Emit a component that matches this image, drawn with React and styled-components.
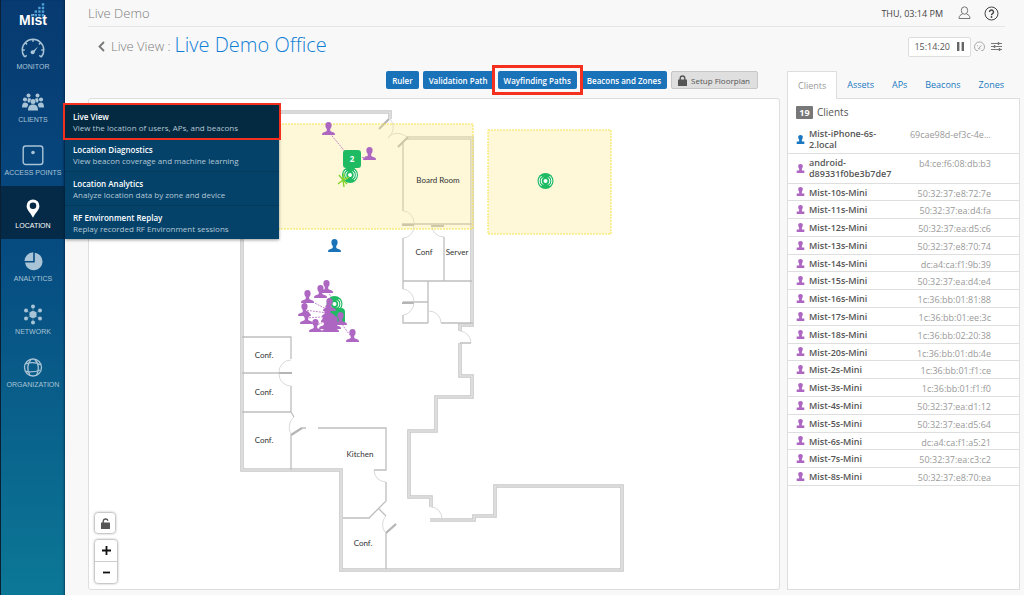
import React from "react";
import styled, { createGlobalStyle, css } from "styled-components";

const sans = '"Open Sans", "Noto Sans", sans-serif';

const Global = createGlobalStyle`
  * { box-sizing: border-box; }
  body { margin: 0; background: #f8f8f8; font-family: ${sans}; font-size: 9px; color: #555; }
  button { font-family: inherit; margin: 0; }
`;

const Page = styled.div`
  display: grid;
  grid-template-columns: 65px minmax(0, 1fr);
  min-height: 100vh;
`;

/* ---------- sidebar ---------- */

const Sidebar = styled.aside`
  border-left: 1px solid #0b2133;
  background: linear-gradient(#073a70, #064a80 40%, #095f8a 68%, #0c7897);
  box-shadow: inset -2px 0 2px -1px rgba(0, 20, 50, 0.5);
`;

const Logo = styled.a`
  display: block;
  position: relative;
  height: 27px;
  padding-top: 11px;
  color: #fff;
  font: bold 14px/18px "Liberation Sans", sans-serif;
  text-align: center;
  text-decoration: none;
`;

const LogoDots = styled.svg`
  position: absolute;
  top: 3px;
  left: 29px;
`;

const NavList = styled.ul`
  margin: 0;
  padding: 0;
  list-style: none;
`;

const NavItem = styled.li`
  position: relative;
  height: 53px;
  ${(p) => p.$active && css`background: #042a47;`}
`;

const NavLink = styled.a`
  display: flex;
  flex-direction: column;
  align-items: center;
  gap: 2px;
  padding-top: 11px;
  color: ${(p) => (p.$active ? "#fff" : "#a9c4d6")};
  font: 7px/10px "Liberation Sans", sans-serif;
  text-decoration: none;
  white-space: nowrap;
  svg { display: block; }
`;

const Flyout = styled.ul`
  position: absolute;
  left: 100%;
  bottom: 0;
  z-index: 5;
  width: 214px;
  margin: 0;
  padding: 0;
  list-style: none;
  background: #04426a;
  box-shadow: 0 1px 3px rgba(0, 0, 0, 0.4);
`;

const FlyoutItem = styled.li`
  border-bottom: ${(p) => (p.$line ? "1px solid #033a5c" : "0")};
  ${(p) => p.$current && css`
    position: relative;
    background: #042a41;
    box-shadow: 0 0 0 2px #f5301f;
  `}
`;

const FlyoutLink = styled.a`
  display: block;
  padding: 6px 8px 5px;
  color: #b4c8d5;
  font-size: 8px;
  line-height: 11px;
  text-decoration: none;
  strong { display: block; color: #fff; font-weight: 600; }
`;

/* ---------- main ---------- */

const Main = styled.main`
  display: flex;
  flex-direction: column;
  min-width: 0;
  padding: 0 4px 5px 23px;
`;

const TopBar = styled.header`
  display: flex;
  align-items: center;
  height: 27px;
  margin-right: 15px;
  border-bottom: 1px solid #e6e6e6;
  color: #7c7c7c;
  font-size: 13px;
  font-weight: 300;
`;

const Org = styled.span`
  flex: 1;
`;

const DateText = styled.time`
  margin-right: 14px;
  color: #444;
  font-size: 9px;
  font-weight: 400;
`;

const IconButton = styled.button`
  display: block;
  padding: 0;
  border: 0;
  background: none;
  color: ${(p) => p.$color || "#777"};
  svg { display: block; }
`;

const TopIcons = styled.div`
  display: flex;
  align-items: center;
  gap: 12px;
  margin-right: 6px;
`;

const TitleRow = styled.div`
  display: flex;
  align-items: center;
  height: 39px;
  padding: 0 18px 0 9px;
`;

const Title = styled.h1`
  display: flex;
  align-items: baseline;
  flex: 1;
  gap: 4px;
  margin: 0;
  padding-bottom: 2px;
  color: #0f7fd6;
  font-size: 20px;
  font-weight: 300;
  line-height: 28px;
`;

const Crumb = styled.a`
  display: flex;
  align-items: center;
  gap: 5px;
  color: #7c7c7c;
  font-size: 13px;
  font-weight: 300;
  text-decoration: none;
`;

const Clock = styled.div`
  display: flex;
  align-items: center;
  gap: 7px;
  height: 20px;
  margin-right: 3px;
  padding: 0 6px 0 5px;
  border: 1px solid #ddd;
  border-radius: 2px;
  background: #fff;
  color: #555;
  font-size: 9px;
`;

const ViewIcons = styled.div`
  display: flex;
  align-items: center;
  gap: 6px;
`;

const Columns = styled.div`
  display: grid;
  grid-template-columns: minmax(0, 1fr) 233px;
  gap: 7px;
  flex: 1;
`;

const MapColumn = styled.section`
  display: flex;
  flex-direction: column;
`;

const Toolbar = styled.div`
  display: flex;
  align-items: center;
  justify-content: flex-end;
  gap: 4px;
  height: 32px;
  padding: 0 22px 4px 0;
`;

const ToolButton = styled.button`
  height: 18px;
  padding: 0 6px;
  border: 0;
  border-radius: 2px;
  background: #1a72b9;
  color: #fff;
  font-size: 8px;
  font-weight: 600;
  white-space: nowrap;
  ${(p) => p.$marked && css`
    position: relative;
    z-index: 1;
    box-shadow: 0 0 0 3px #f8f8f8;
    &::after {
      content: "";
      position: absolute;
      inset: -6px;
      border: 3px solid #f5301f;
    }
  `}
`;

const SetupButton = styled(ToolButton)`
  display: flex;
  align-items: center;
  gap: 4px;
  padding: 0 7px 0 6px;
  border: 1px solid #c6c6c6;
  background: #dfdfdf;
  color: #555;
  font-weight: 400;
`;

const MapFrame = styled.div`
  position: relative;
  flex: 1;
  border: 1px solid #dedede;
  border-radius: 3px;
  background: #fff;
`;

const Plan = styled.svg`
  display: block;
  width: 100%;
`;

const MapControls = styled.div`
  position: absolute;
  left: 6px;
  bottom: 6px;
  display: flex;
  flex-direction: column;
  align-items: flex-start;
  gap: 7px;
`;

const ControlBox = styled.div`
  width: ${(p) => p.$width};
  border-radius: 3px;
  background: #fff;
  box-shadow: 0 0 3px rgba(0, 0, 0, 0.6);
`;

const ControlButton = styled.button`
  display: flex;
  align-items: center;
  justify-content: center;
  width: 100%;
  height: ${(p) => p.$height};
  padding: 0;
  border: 0;
  background: none;
  color: #111;
  & + & { border-top: 1px solid #ccc; }
`;

/* ---------- side panel ---------- */

const SideColumn = styled.aside`
  display: flex;
  flex-direction: column;
  padding-top: 5px;
`;

const Tabs = styled.div`
  display: flex;
  justify-content: space-between;
  padding-right: 8px;
`;

const Tab = styled.button`
  height: 27px;
  padding: 0 8px;
  border: 0;
  background: none;
  color: #1a78c2;
  font-size: 9px;
  ${(p) => p.$active && css`
    position: relative;
    height: 28px;
    margin-bottom: -1px;
    padding: 0 10px;
    border: 1px solid #dedede;
    border-bottom: 0;
    background: #fff;
    color: #999;
  `}
`;

const Panel = styled.div`
  flex: 1;
  border: 1px solid #dedede;
  background: #fff;
`;

const PanelTitle = styled.h2`
  display: flex;
  align-items: center;
  gap: 4px;
  height: 26px;
  margin: 0;
  padding-left: 8px;
  color: #555;
  font-size: 10px;
  font-weight: 400;
`;

const Count = styled.span`
  width: 17px;
  border-radius: 1px;
  background: #777;
  color: #fff;
  font-size: 9px;
  font-weight: 700;
  line-height: 13px;
  text-align: center;
`;

const ClientTable = styled.table`
  width: 100%;
  height: 361px;
  border-collapse: collapse;
  table-layout: fixed;
  font-size: 9px;
  line-height: 11px;
`;

const IconCell = styled.td`
  width: 21px;
  padding: 0 0 0 8px;
  border-bottom: 1px solid #dedede;
  svg { display: block; }
`;

const NameCell = styled.th`
  width: 86px;
  padding: 3px 0 2px;
  border-bottom: 1px solid #dedede;
  color: #555;
  font-weight: 600;
  text-align: left;
  vertical-align: top;
`;

const MacCell = styled.td`
  padding: 4px 28px 1px 0;
  border-bottom: 1px solid #dedede;
  color: #999;
  text-align: right;
  vertical-align: top;
  white-space: nowrap;
`;

/* ---------- icons ---------- */

const personPath =
  "M6.5 0C8.7 0 9.7 1.3 9.6 3.4C9.5 5.2 8.9 6.1 8.2 6.9L8.3 8.9C8.8 9.8 11.8 10 12.6 11.1L13 13H0L.4 11.1C1.2 10 4.2 9.8 4.7 8.9L4.8 6.9C4.1 6.1 3.5 5.2 3.4 3.4C3.3 1.3 4.3 0 6.5 0Z";

const Person = ({ color }) => (
  <svg width="9" height="9" viewBox="0 0 13 13" fill={color}>
    <path d="M6.500 0C9 0 10 1.300 9.800 3.400C9.700 5 9 6 8.500 6.900V9.500H12V13H1V9.500H4.500V6.900C4 6 3.300 5 3.200 3.400C3 1.300 4 0 6.500 0Z" />
  </svg>
);

const Lock = ({ open }) => (
  <svg width="9" height="11" viewBox="0 0 9 11">
    <path d={open ? "M2.2 5V3.2a2.4 2.4 0 0 1 4.7-.5" : "M2.2 5V3.3a2.3 2.3 0 0 1 4.6 0V5"} fill="none" stroke="#555" strokeWidth="1.4" />
    <rect y="4.6" width="9" height="6.4" rx=".5" fill="#555" />
  </svg>
);

const navIcons = {
  monitor: (
    <svg width="24" height="22" viewBox="0 0 24 22" fill="none" stroke="currentColor" strokeWidth="1.5">
      <path d="M3.7 19A10.8 10.8 0 1 1 20.3 19M3.7 19l2-1.6M20.3 19l-2-1.6M1.6 12h2.2M20.2 12h2.2M12 1.4v2.4M4.4 4.8l1.6 1.6M19.6 4.8 18 6.4" />
      <path d="M10.5 14.2 17 8.5l-4.7 7.4z" fill="currentColor" stroke="none" />
      <circle cx="11.6" cy="14.3" r="2" fill="currentColor" stroke="none" />
    </svg>
  ),
  clients: (
    <svg width="24" height="22" viewBox="0 0 24 22" fill="currentColor">
      <circle cx="7.5" cy="4.5" r="2" /><circle cx="16.5" cy="4.5" r="2" />
      <circle cx="4" cy="8.5" r="2.1" /><circle cx="20" cy="8.5" r="2.1" />
      <path d="M6.4 9.4 7 7.2h2.3L10 8.6 8.6 11.4 7 11.4zM17.6 9.4 17 7.2h-2.3L14 8.6l1.4 2.8h1.6z" />
      <path d="M1 16.5c0-3.5 1-5 3-5s3 1 3.2 2.5L6 16.5zM23 16.5c0-3.5-1-5-3-5s-3 1-3.2 2.5L18 16.5z" />
      <circle cx="12" cy="10.5" r="2.5" />
      <path d="M7 19.5c0-4 1.5-6 5-6s5 2 5 6z" />
    </svg>
  ),
  ap: (
    <svg width="22" height="22" viewBox="0 0 22 22" fill="none" stroke="currentColor" strokeWidth="1.4">
      <rect x="1.2" y="2" width="19.6" height="18.5" rx="2.5" />
      <circle cx="11" cy="8.5" r="1.8" fill="currentColor" stroke="none" />
    </svg>
  ),
  location: (
    <svg width="22" height="22" viewBox="0 0 22 22" fill="currentColor">
      <path fillRule="evenodd" d="M11 2.500a6.400 6.400 0 0 1 6.400 6.400C17.400 13 13 16 11 20.800 9 16 4.600 13 4.600 8.900A6.400 6.400 0 0 1 11 2.500zM11 5.500a3.300 3.300 0 1 0 0 6.600 3.300 3.300 0 0 0 0-6.600z" />
    </svg>
  ),
  analytics: (
    <svg width="22" height="22" viewBox="0 0 22 22" fill="currentColor">
      <path d="M12.8 2.8A8.800 8.800 0 1 1 3 12.600h9.800z" />
      <path d="M11.2 2.3v8.8H2.500a8.800 8.800 0 0 1 8.700-8.800z" />
    </svg>
  ),
  network: (
    <svg width="22" height="22" viewBox="0 0 22 22" fill="currentColor">
      <circle cx="11" cy="11.5" r="3.6" />
      <circle cx="11" cy="3.5" r="2" /><circle cx="11" cy="19.5" r="2" />
      <circle cx="4" cy="7.5" r="2" /><circle cx="18" cy="7.5" r="2" />
      <circle cx="4" cy="15.5" r="2" /><circle cx="18" cy="15.5" r="2" />
      <path d="M11 5v13M5 8l12 7M5 15l12-7" stroke="currentColor" strokeWidth=".4" />
    </svg>
  ),
  organization: (
    <svg width="22" height="22" viewBox="0 0 22 22" fill="none" stroke="currentColor" strokeWidth="1.3">
      <circle cx="11" cy="11.5" r="8.5" />
      <path d="M9 3.300c-4 5-4 11-1 16.200M12.500 3.200c4.500 4 5 10.500 2 16M3.500 8c5-2 11-1.500 15.500 1M3.500 15.500c5 .8 10 .5 14.500-1.500" />
    </svg>
  ),
};

/* ---------- floor plan ---------- */

const outerWalls =
  "M242 112H390V119M242 112V470H341V570H622V486H495V516H474V520H430M431 507V497H409V431H436V397H472V376H460V343M460 331V325H472V138H407";

const innerWalls =
  "M403 143V211M402 224H472M403 238V281M444 237V281M403 281H472M403 281V289M428 281V323M403 302H428M403 315V323H428M441 323H473M460 343H471" +
  "M242 337H291V359M242 373H291M291 386V412H242M291 412L294 417M291 470V435L302 428H306M318 428H386V470H374M386 482V501L369 518H343M379 509L386 516M386 569V533L396 524";

const heavyWalls = "M398 147L408 137M379 129L389 119M402 225H414M431 226H444M402 303H414M279 373H292M291 435L302 428M386 533L396 524";

const doors =
  "M390 119C395 125 394 133 388 138C392 132 400 132 407 137M403 211A11 12 0 0 1 414 223M414 226A11 12 0 0 1 403 238M432 226A12 11 0 0 0 444 237" +
  "M403 289A12 13 0 0 1 414 302A12 13 0 0 1 403 315M429 311A12 12 0 0 1 441 323M460 331A12 12 0 0 1 471 343M291 360A12 12 0 0 0 279 372M279 374A12 12 0 0 0 291 386" +
  "M294 417C289 421 288 429 291 434M374 470A12 12 0 0 0 386 482M386 516C382 520 381 528 386 533M431 507A11 12 0 0 1 442 520";

const rooms = [
  ["Board Room", 438, 183], ["Conf", 424, 255], ["Server", 457, 255], ["Conf.", 264, 358],
  ["Conf.", 264, 395], ["Conf.", 264, 443], ["Kitchen", 360, 457], ["Conf.", 363, 546],
];

const people = [
  [328, 129], [369, 154], [326, 287], [320, 292], [307, 297], [304, 310], [306, 318],
  [352, 336], [329, 305], [328, 311], [327, 316], [340, 319], [334, 323], [330, 320],
  [315, 326], [325, 323], [328, 326], [332, 326],
];

const Ap = ({ x, y }) => (
  <g transform={`translate(${x} ${y})`} fill="none" stroke="#fff">
    <circle r="8" fill="#1fbb63" stroke="none" />
    <circle r="2" fill="#fff" stroke="none" />
    <path d="M2.500 -3.500A4.300 4.300 0 0 1 2.500 3.500M-2.500 -3.500A4.300 4.300 0 0 0 -2.500 3.500M4 -5A6.400 6.400 0 0 1 4 5M-4 -5A6.400 6.400 0 0 0 -4 5" />
  </g>
);

const FloorPlan = () => (
  <Plan viewBox="89 99 690 489" role="img" aria-label="Office floor plan">
    <g fill="none">
      <path d={outerWalls} stroke="#c8c8c8" strokeWidth="3.6" />
      <path d={outerWalls} stroke="#ebebeb" strokeWidth="1.2" />
      <path d={innerWalls} stroke="#bebebe" strokeWidth="1.3" />
      <path d={heavyWalls} stroke="#b5b5b5" strokeWidth="2.2" />
      <path d={doors} stroke="#cfcfcf" strokeWidth=".8" />
    </g>
    <g fill="#fbe98c" fillOpacity=".34" stroke="#f4e34d" strokeDasharray="2 1">
      <rect x="246" y="124" width="227" height="105" />
      <rect x="488" y="130" width="123" height="104" />
    </g>
    <g fontFamily="Lato, sans-serif" fontSize="8" fill="#333" textAnchor="middle">
      {rooms.map(([name, x, y]) => <text key={x + "-" + y} x={x} y={y}>{name}</text>)}
    </g>
    <path
      d="M328 131L352 160L369 156M326 289L336 304M307 299L336 314L304 310M306 318L336 316L315 326M352 338L336 316"
      fill="none" stroke="#b468c4" strokeWidth=".8" strokeDasharray="2 1"
    />
    <Ap x={545.5} y={181} />
    <Ap x={350} y={175} />
    <path d="M343 180L344 173M343 180L349 177M343 180L347 184M343 180L344 187M343 180L338 184M343 180L339 175" stroke="#86d22c" strokeWidth="1.4" />
    <Ap x={334.5} y={304} />
    <rect x="328" y="308" width="17" height="17" rx="4" fill="#1fbb63" />
    <path d="M346 150h12a3 3 0 0 1 3 3v12a3 3 0 0 1-3 3h-3l-3 3-3-3h-3a3 3 0 0 1-3-3v-12a3 3 0 0 1 3-3z" fill="#1fbb63" />
    <text x="352" y="162" fontFamily="Open Sans, sans-serif" fontSize="8" fontWeight="700" fill="#fff" textAnchor="middle">2</text>
    {people.map(([x, y]) => (
      <path key={x + "-" + y} d={personPath} transform={`translate(${x - 6} ${y - 7})`} fill="#ad66c1" />
    ))}
    <path d={personPath} transform="translate(328 239)" fill="#1a72b9" />
  </Plan>
);

/* ---------- data ---------- */

const nav = [
  ["monitor", "MONITOR"], ["clients", "CLIENTS"], ["ap", "ACCESS POINTS"], ["location", "LOCATION"],
  ["analytics", "ANALYTICS"], ["network", "NETWORK"], ["organization", "ORGANIZATION"],
];

const flyout = [
  ["Live View", "View the location of users, APs, and beacons"],
  ["Location Diagnostics", "View beacon coverage and machine learning"],
  ["Location Analytics", "Analyze location data by zone and device"],
  ["RF Environment Replay", "Replay recorded RF Environment sessions"],
];

const clients = [
  ["Mist-iPhone-6s-2.local", "69cae98d-ef3c-4e..."],
  ["android-d89331f0be3b7de7", "b4:ce:f6:08:db:b3"],
  ["Mist-10s-Mini", "50:32:37:e8:72:7e"],
  ["Mist-11s-Mini", "50:32:37:ea:d4:fa"],
  ["Mist-12s-Mini", "50:32:37:ea:d5:c6"],
  ["Mist-13s-Mini", "50:32:37:e8:70:74"],
  ["Mist-14s-Mini", "dc:a4:ca:f1:9b:39"],
  ["Mist-15s-Mini", "50:32:37:ea:d4:e4"],
  ["Mist-16s-Mini", "1c:36:bb:01:81:88"],
  ["Mist-17s-Mini", "1c:36:bb:01:ee:3c"],
  ["Mist-18s-Mini", "1c:36:bb:02:20:38"],
  ["Mist-20s-Mini", "1c:36:bb:01:db:4e"],
  ["Mist-2s-Mini", "1c:36:bb:01:f1:ce"],
  ["Mist-3s-Mini", "1c:36:bb:01:f1:f0"],
  ["Mist-4s-Mini", "50:32:37:ea:d1:12"],
  ["Mist-5s-Mini", "50:32:37:ea:d5:64"],
  ["Mist-6s-Mini", "dc:a4:ca:f1:a5:21"],
  ["Mist-7s-Mini", "50:32:37:ea:c3:c2"],
  ["Mist-8s-Mini", "50:32:37:e8:70:ea"],
];

const logoDots = [[3, 3], [2, 2], [3, 2], [1, 1], [2, 1], [3, 1], [0, 0], [1, 0], [2, 0], [3, 0]];

export default function App() {
  return (
    <Page>
      <Global />
      <Sidebar>
        <Logo href="#">
          <LogoDots width="16" height="15" viewBox="0 0 16 15" fill="#4d9fd8">
            {logoDots.map(([x, y]) => <rect key={x + "" + y} x={1 + x * 3.6} y={11 - y * 3.6} width="2.4" height="2.4" />)}
          </LogoDots>
          Mist
        </Logo>
        <nav>
          <NavList>
            {nav.map(([id, label]) => (
              <NavItem key={id} $active={id === "location"}>
                <NavLink href="#" $active={id === "location"}>
                  {navIcons[id]}
                  {label}
                </NavLink>
                {id === "location" && (
                  <Flyout>
                    {flyout.map(([name, text], i) => (
                      <FlyoutItem key={name} $current={i === 0} $line={i === 1 || i === 2}>
                        <FlyoutLink href="#"><strong>{name}</strong>{text}</FlyoutLink>
                      </FlyoutItem>
                    ))}
                  </Flyout>
                )}
              </NavItem>
            ))}
          </NavList>
        </nav>
      </Sidebar>

      <Main>
        <TopBar>
          <Org>Live Demo</Org>
          <DateText>THU, 03:14 PM</DateText>
          <TopIcons>
            <IconButton aria-label="Account">
              <svg width="15" height="14" viewBox="0 0 15 14" fill="none" stroke="currentColor">
                <ellipse cx="7.5" cy="4.5" rx="3.2" ry="3.7" />
                <path d="M5.500 8C3.500 9 2 9.500 2 12.500H13C13 9.500 11.500 9 9.500 8" />
              </svg>
            </IconButton>
            <IconButton aria-label="Help" $color="#444">
              <svg width="15" height="15" viewBox="0 0 15 15" fill="none" stroke="currentColor">
                <circle cx="7.5" cy="7.5" r="6.5" />
                <path d="M5.500 6a2 2 0 1 1 3 1.700Q7.500 8.300 7.500 9.300" strokeWidth="1.4" />
                <circle cx="7.5" cy="11" r=".9" fill="currentColor" stroke="none" />
              </svg>
            </IconButton>
          </TopIcons>
        </TopBar>

        <TitleRow>
          <Title>
            <Crumb href="#">
              <svg width="9" height="11" viewBox="0 0 9 11" fill="none" stroke="#777" strokeWidth="1.8"><path d="M7 1 2.500 5.500 7 10" /></svg>
              Live View :
            </Crumb>
            Live Demo Office
          </Title>
          <Clock>
            15:14:20
            <IconButton aria-label="Pause" $color="#666">
              <svg width="7" height="9" viewBox="0 0 7 9" fill="currentColor"><path d="M0 0h2.400v9H0zM4.600 0H7v9H4.600z" /></svg>
            </IconButton>
          </Clock>
          <ViewIcons>
            <IconButton aria-label="Speed" $color="#aaa">
              <svg width="11" height="11" viewBox="0 0 11 11" fill="none" stroke="currentColor">
                <path d="M3.800 9.500H2A5 5 0 1 1 9 9.500H7.200" /><path d="M4.300 7.800 7.500 4.300M4.300 7.800h2M3 4.500l1 .6" />
              </svg>
            </IconButton>
            <IconButton aria-label="Settings" $color="#777">
              <svg width="11" height="11" viewBox="0 0 11 11" fill="none" stroke="currentColor">
                <path d="M0 2.500h11M0 5.500h11M0 8.500h11" /><path d="M7.500 1v3M3.500 4v3M8.500 7v3" strokeWidth="1.4" />
              </svg>
            </IconButton>
          </ViewIcons>
        </TitleRow>

        <Columns>
          <MapColumn>
            <Toolbar>
              <ToolButton>Ruler</ToolButton>
              <ToolButton>Validation Path</ToolButton>
              <ToolButton $marked>Wayfinding Paths</ToolButton>
              <ToolButton>Beacons and Zones</ToolButton>
              <SetupButton><Lock />Setup Floorplan</SetupButton>
            </Toolbar>
            <MapFrame>
              <FloorPlan />
              <MapControls>
                <ControlBox $width="20px">
                  <ControlButton $height="20px" aria-label="Unlock map"><Lock open /></ControlButton>
                </ControlBox>
                <ControlBox $width="22px">
                  <ControlButton $height="21px" aria-label="Zoom in">
                    <svg width="9" height="9" viewBox="0 0 9 9" stroke="currentColor" strokeWidth="1.8"><path d="M0 4.500h9M4.500 0v9" /></svg>
                  </ControlButton>
                  <ControlButton $height="22px" aria-label="Zoom out">
                    <svg width="7" height="9" viewBox="0 0 7 9" stroke="currentColor" strokeWidth="1.8"><path d="M0 4.500h7" /></svg>
                  </ControlButton>
                </ControlBox>
              </MapControls>
            </MapFrame>
          </MapColumn>

          <SideColumn>
            <Tabs role="tablist">
              {["Clients", "Assets", "APs", "Beacons", "Zones"].map((t, i) => (
                <Tab key={t} role="tab" aria-selected={i === 0} $active={i === 0}>{t}</Tab>
              ))}
            </Tabs>
            <Panel>
              <PanelTitle><Count>19</Count>Clients</PanelTitle>
              <ClientTable>
                <tbody>
                  {clients.map(([name, mac], i) => (
                    <tr key={name}>
                      <IconCell><Person color={i === 0 ? "#1a78c2" : "#ad66c1"} /></IconCell>
                      <NameCell scope="row">{name}</NameCell>
                      <MacCell>{mac}</MacCell>
                    </tr>
                  ))}
                </tbody>
              </ClientTable>
            </Panel>
          </SideColumn>
        </Columns>
      </Main>
    </Page>
  );
}
